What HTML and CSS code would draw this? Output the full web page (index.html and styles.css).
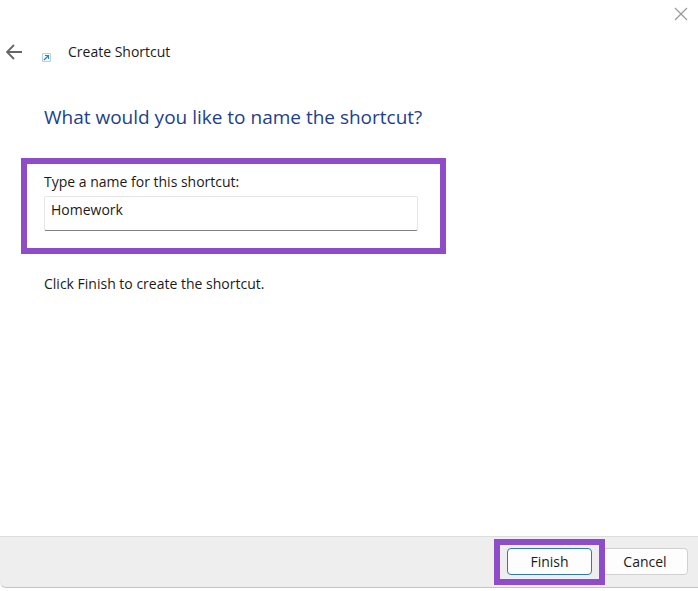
FILE: index.html
```html
<!DOCTYPE html>
<html lang="en">
<head>
<meta charset="utf-8">
<title>Create Shortcut</title>
<link rel="stylesheet" href="styles.css">
</head>
<body>
<form class="wizard">
  <div class="titlebar">
    <button class="icon-button" type="button" aria-label="Close">
      <svg width="14" height="14" viewBox="0 0 14 14" fill="none" stroke="#999" stroke-width="1.2"><path d="M1 1l12 12M13 1L1 13"/></svg>
    </button>
  </div>
  <header class="header">
    <button class="icon-button" type="button" aria-label="Back">
      <svg width="16" height="16" viewBox="0 0 16 16" fill="none" stroke="#666" stroke-width="1.8"><path d="M16 8H1M8 1L1 8l7 7"/></svg>
    </button>
    <svg class="shortcut-icon" width="9" height="9" viewBox="0 0 9 9" fill="none"><path d="M.5 .5h8v8h-8z" fill="#f5fafd" stroke="#b5d3e3"/><path d="M2 7l4.500-4.500M3 2.500h3.500V6" stroke="#3484ad" stroke-width="1.200"/></svg>
    <span class="title">Create Shortcut</span>
  </header>
  <main class="content">
    <h1 class="question">What would you like to name the shortcut?</h1>
    <div class="field highlight">
      <label for="name">Type a name for this shortcut:</label>
      <input class="name-input" id="name" type="text" value="Homework">
    </div>
    <p class="hint">Click Finish to create the shortcut.</p>
  </main>
  <footer class="footer">
    <div class="finish"><button class="button primary" type="submit">Finish</button></div>
    <button class="button" type="button">Cancel</button>
  </footer>
</form>
</body>
</html>
```
FILE: styles.css
```css
* {
  box-sizing: border-box;
}

body {
  margin: 0;
  background: #fff;
  color: #1a1a1a;
  font: 14px/20px "Open Sans", "Noto Sans", sans-serif;
}

.wizard {
  display: flex;
  flex-direction: column;
  min-height: 100vh;
  padding-bottom: 3px;
}

.titlebar {
  display: flex;
  justify-content: flex-end;
  padding: 7px 10px 0;
}

.icon-button {
  display: flex;
  padding: 0;
  border: 0;
  background: none;
}

.header {
  display: flex;
  align-items: center;
  margin-top: 21px;
  padding-left: 6px;
}

.shortcut-icon {
  margin: 10px 17px 0 20px;
}

.content {
  flex: 1;
  padding: 40px 21px 0;
}

.question {
  margin: 0 0 26px;
  padding-left: 23px;
  color: #1d3f8c;
  font-size: 19px;
  font-weight: 400;
  line-height: 30px;
}

.field {
  display: flex;
  flex-direction: column;
  max-width: 425px;
  padding: 8px 22px 17px 17px;
}

.highlight {
  border: 6px solid #8f4cc9;
}

.name-input {
  height: 35px;
  margin-top: 4px;
  padding: 0 6px 8px;
  border: 1px solid #e6e6e6;
  border-bottom-color: #808080;
  border-radius: 2px;
  background: #fff;
  color: inherit;
  font: inherit;
}

.hint {
  margin: 20px 0 0;
  padding-left: 23px;
}

.footer {
  display: flex;
  justify-content: flex-end;
  gap: 10px;
  padding: 11px 10px 12px;
  border-top: 1px solid #ddd;
  border-bottom: 1px solid #c4c4c4;
  border-bottom-left-radius: 6px;
  background: #eee;
}

.finish {
  position: relative;
}

.finish::after {
  content: "";
  position: absolute;
  inset: -9px -13px -10px;
  border: 6px solid #8f4cc9;
  pointer-events: none;
}

.button {
  width: 86px;
  height: 27px;
  padding: 0;
  border: 1px solid #d0d0d0;
  border-radius: 4px;
  background: #fdfdfd;
  color: inherit;
  font: inherit;
}

.primary {
  width: 85px;
  border-color: #2f79ab;
}
```
